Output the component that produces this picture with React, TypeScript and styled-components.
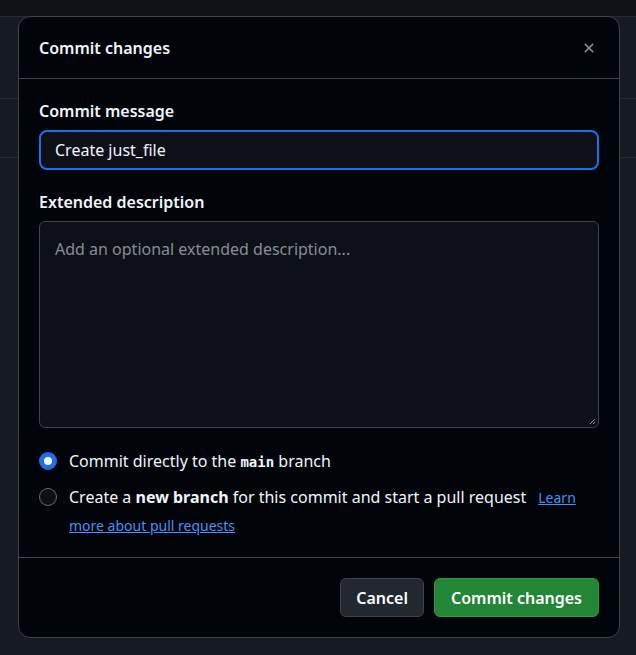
import React from "react";
import styled, { createGlobalStyle } from "styled-components";

const Global = createGlobalStyle`
  html, body { margin: 0; padding: 0; }
  body {
    background: #161b22;
    font-family: "Noto Sans", "Liberation Sans", sans-serif;
    color: #f0f6fc;
    width: 636px;
    height: 655px;
    overflow: hidden;
  }
  * { box-sizing: border-box; }
`;

const Page = styled.div`
  position: relative;
  width: 636px;
  height: 655px;
  display: flex;
  flex-direction: column;
`;

const BackdropBand = styled.div<{ $h: number; $bg: string }>`
  height: ${(p) => p.$h}px;
  background: ${(p) => p.$bg};
  border-bottom: 1px solid #262c35;
  flex: none;
`;

const Dialog = styled.div`
  position: absolute;
  left: 18px;
  top: 16px;
  width: 602px;
  background: #010409;
  border: 1px solid #3d444d;
  border-radius: 12px;
  display: flex;
  flex-direction: column;
`;

const Header = styled.div`
  height: 62px;
  padding: 0 20px;
  display: flex;
  align-items: center;
  justify-content: space-between;
  border-bottom: 1px solid #3d444d;
`;

const Title = styled.h1`
  margin: 0;
  font-size: 16px;
  font-weight: 600;
  color: #f0f6fc;
`;

const CloseButton = styled.button`
  width: 28px;
  height: 28px;
  margin-right: -4px;
  padding: 0;
  border: 0;
  background: transparent;
  color: #9198a1;
  display: flex;
  align-items: center;
  justify-content: center;
`;

const Body = styled.div`
  padding: 20px 20px 18px;
  display: flex;
  flex-direction: column;
`;

const Label = styled.label`
  display: block;
  font-size: 16px;
  font-weight: 600;
  line-height: 24px;
  margin-bottom: 7px;
`;

const TextInput = styled.div`
  height: 40px;
  border: 2px solid #1f6feb;
  border-radius: 8px;
  background: #0d1117;
  padding: 0 14px;
  display: flex;
  align-items: center;
  font-size: 16px;
  color: #f0f6fc;
  margin-bottom: 20px;
`;

const TextArea = styled.div`
  position: relative;
  height: 207px;
  border: 1px solid #3d444d;
  border-radius: 6px;
  background: #0d1117;
  padding: 16px 15px;
  font-size: 16px;
  color: #858d97;
  margin-bottom: 19px;
`;

const Grip = styled.svg`
  position: absolute;
  right: 2px;
  bottom: 2px;
`;

const RadioList = styled.div`
  display: flex;
  flex-direction: column;
  gap: 8px;
`;

const RadioRow = styled.div`
  display: flex;
  align-items: flex-start;
  gap: 12px;
  font-size: 16px;
  line-height: 28px;
  color: #f0f6fc;
`;

const Radio = styled.span<{ $checked?: boolean }>`
  flex: none;
  width: 18px;
  height: 18px;
  margin-top: 5px;
  border-radius: 50%;
  border: ${(p) => (p.$checked ? "5px solid #1f6feb" : "1px solid #656c76")};
  background: ${(p) => (p.$checked ? "#ffffff" : "#0d1117")};
`;

const Code = styled.code`
  font-family: "DejaVu Sans Mono", "Liberation Mono", monospace;
  font-size: 14px;
  font-weight: 600;
  line-height: 1;
`;

const Link = styled.a`
  color: #4493f8;
  text-decoration: underline;
  font-size: 14px;
  line-height: 1;
  margin-left: 12px;
`;

const Footer = styled.div`
  border-top: 1px solid #3d444d;
  padding: 20px;
  display: flex;
  justify-content: flex-end;
  gap: 10px;
`;

const Button = styled.button<{ $primary?: boolean }>`
  height: 39px;
  padding: 0 ${(p) => (p.$primary ? 16 : 15)}px;
  border-radius: 6px;
  border: 1px solid ${(p) => (p.$primary ? "#2e9a40" : "#3d444d")};
  background: ${(p) => (p.$primary ? "#238636" : "#212830")};
  color: #ffffff;
  font-family: inherit;
  font-size: 16px;
  font-weight: 600;
`;

export default function App() {
  return (
    <>
      <Global />
      <Page>
        <BackdropBand $h={17} $bg="#0f1318" />
        <BackdropBand $h={82} $bg="#161b22" />
        <BackdropBand $h={59} $bg="#161b22" />
        <Dialog>
          <Header>
            <Title>Commit changes</Title>
            <CloseButton aria-label="Close">
              <svg width="16" height="16" viewBox="0 0 16 16" fill="currentColor">
                <path d="M3.72 3.72a.75.75 0 0 1 1.06 0L8 6.94l3.22-3.22a.749.749 0 0 1 1.275.326.749.749 0 0 1-.215.734L9.06 8l3.22 3.22a.749.749 0 0 1-.326 1.275.749.749 0 0 1-.734-.215L8 9.06l-3.22 3.22a.751.751 0 0 1-1.042-.018.751.751 0 0 1-.018-1.042L6.94 8 3.72 4.78a.75.75 0 0 1 0-1.06Z" />
              </svg>
            </CloseButton>
          </Header>
          <Body>
            <Label>Commit message</Label>
            <TextInput>Create just_file</TextInput>
            <Label>Extended description</Label>
            <TextArea>
              Add an optional extended description...
              <Grip width="8" height="8" viewBox="0 0 8 8">
                <path d="M7 2 L2 7 M7 5 L5 7" stroke="#9198a1" strokeWidth="1" />
              </Grip>
            </TextArea>
            <RadioList>
              <RadioRow>
                <Radio $checked />
                <span>
                  Commit directly to the <Code>main</Code> branch
                </span>
              </RadioRow>
              <RadioRow>
                <Radio />
                <span>
                  Create a <b>new branch</b> for this commit and start a pull request
                  <Link href="#">Learn more about pull requests</Link>
                </span>
              </RadioRow>
            </RadioList>
          </Body>
          <Footer>
            <Button>Cancel</Button>
            <Button $primary>Commit changes</Button>
          </Footer>
        </Dialog>
      </Page>
    </>
  );
}
